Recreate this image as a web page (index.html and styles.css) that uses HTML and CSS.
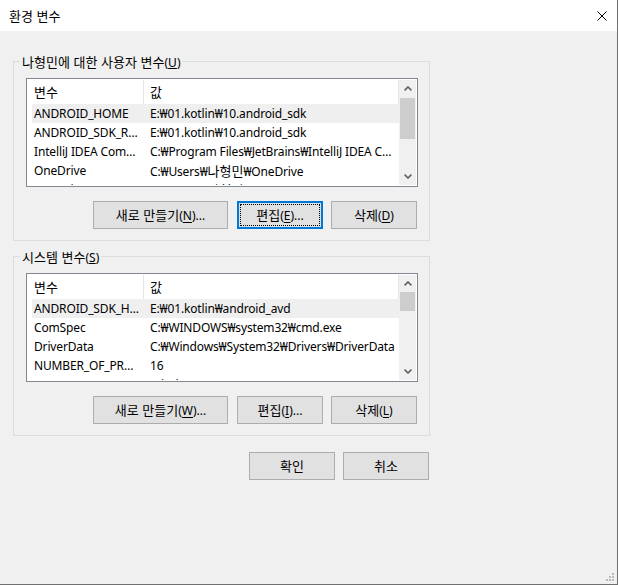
FILE: index.html
```html
<!DOCTYPE html>
<html lang="ko">
<head>
<meta charset="utf-8">
<title>환경 변수</title>
<link rel="stylesheet" href="styles.css">
</head>
<body>
<div class="window">
  <div class="titlebar">
    <span class="title ko">환경 변수</span>
    <svg class="close" width="10" height="10" viewBox="0 0 10 10"><path d="M0.5 0.5 L9.5 9.5 M9.5 0.5 L0.5 9.5" stroke="#000" stroke-width="1" fill="none"/></svg>
  </div>
  <div class="content">
    <fieldset class="group">
      <legend><span class="ko">나형민에 대한 사용자 변수</span>(<u>U</u>)</legend>
      <div class="listview">
        <div class="lv-body">
          <div class="lv-header"><div class="cell c1 ko">변수</div><div class="cell c2 ko">값</div></div>
          <div class="row hot"><div class="cell c1">ANDROID_HOME</div><div class="cell c2">E:₩01.kotlin₩10.android_sdk</div></div>
          <div class="row"><div class="cell c1">ANDROID_SDK_ROOT</div><div class="cell c2">E:₩01.kotlin₩10.android_sdk</div></div>
          <div class="row"><div class="cell c1">IntelliJ IDEA Community Edition</div><div class="cell c2">C:₩Program Files₩JetBrains₩IntelliJ IDEA Community Edition 2021.1₩bin;</div></div>
          <div class="row"><div class="cell c1">OneDrive</div><div class="cell c2">C:₩Users₩<span class="ko">나형민</span>₩OneDrive</div></div>
          <div class="row"><div class="cell c1">OneDriveConsumer</div><div class="cell c2">C:₩Users₩<span class="ko">나형민</span>₩OneDrive</div></div>
        </div>
        <div class="scrollbar">
          <div class="sb-btn"><svg width="8" height="5" viewBox="0 0 8 5"><path d="M0.6 4.4 L4 1 L7.4 4.4" stroke="#606060" stroke-width="1.6" fill="none"/></svg></div>
          <div class="sb-track"><div class="thumb thumb-user"></div></div>
          <div class="sb-btn"><svg width="8" height="5" viewBox="0 0 8 5"><path d="M0.6 0.6 L4 4 L7.4 0.6" stroke="#606060" stroke-width="1.6" fill="none"/></svg></div>
        </div>
      </div>
      <div class="buttons">
        <button class="btn wide"><span class="ko">새로 만들기</span>(<u>N</u>)...</button>
        <button class="btn focus gap9"><span class="ko">편집</span>(<u>E</u>)...</button>
        <button class="btn gap8"><span class="ko">삭제</span>(<u>D</u>)</button>
      </div>
    </fieldset>

    <fieldset class="group second">
      <legend><span class="ko">시스템 변수</span>(<u>S</u>)</legend>
      <div class="listview">
        <div class="lv-body">
          <div class="lv-header"><div class="cell c1 ko">변수</div><div class="cell c2 ko">값</div></div>
          <div class="row hot"><div class="cell c1">ANDROID_SDK_HOME</div><div class="cell c2">E:₩01.kotlin₩android_avd</div></div>
          <div class="row"><div class="cell c1">ComSpec</div><div class="cell c2">C:₩WINDOWS₩system32₩cmd.exe</div></div>
          <div class="row"><div class="cell c1">DriverData</div><div class="cell c2">C:₩Windows₩System32₩Drivers₩DriverData</div></div>
          <div class="row"><div class="cell c1">NUMBER_OF_PROCESSORS</div><div class="cell c2">16</div></div>
          <div class="row"><div class="cell c1">OS</div><div class="cell c2">Windows_NT</div></div>
        </div>
        <div class="scrollbar">
          <div class="sb-btn"><svg width="8" height="5" viewBox="0 0 8 5"><path d="M0.6 4.4 L4 1 L7.4 4.4" stroke="#606060" stroke-width="1.6" fill="none"/></svg></div>
          <div class="sb-track"><div class="thumb thumb-system"></div></div>
          <div class="sb-btn"><svg width="8" height="5" viewBox="0 0 8 5"><path d="M0.6 0.6 L4 4 L7.4 0.6" stroke="#606060" stroke-width="1.6" fill="none"/></svg></div>
        </div>
      </div>
      <div class="buttons">
        <button class="btn wide"><span class="ko">새로 만들기</span>(<u>W</u>)...</button>
        <button class="btn gap9"><span class="ko">편집</span>(<u>I</u>)...</button>
        <button class="btn gap8"><span class="ko">삭제</span>(<u>L</u>)</button>
      </div>
    </fieldset>

    <div class="dialog-buttons">
      <button class="btn"><span class="ko">확인</span></button>
      <button class="btn gap8"><span class="ko">취소</span></button>
    </div>
  </div>
  <svg class="grip" width="8" height="8" viewBox="0 0 8 8">
    <rect x="6" y="0" width="2" height="2" fill="#b9b9b9"/>
    <rect x="3" y="3" width="2" height="2" fill="#b9b9b9"/>
    <rect x="6" y="3" width="2" height="2" fill="#b9b9b9"/>
    <rect x="0" y="6" width="2" height="2" fill="#b9b9b9"/>
    <rect x="3" y="6" width="2" height="2" fill="#b9b9b9"/>
    <rect x="6" y="6" width="2" height="2" fill="#b9b9b9"/>
  </svg>
</div>
</body>
</html>
```

FILE: styles.css
```css
* {
  box-sizing: border-box;
}

html, body {
  margin: 0;
  padding: 0;
  background: #f0f0f0;
}

body {
  font-family: "Noto Sans", "Noto Sans CJK KR", sans-serif;
  font-size: 12px;
  color: #000;
}

.ko {
  font-family: "Noto Sans CJK KR", sans-serif;
  font-size: 13px;
}

.window {
  position: relative;
  width: 618px;
  height: 585px;
  background: #f0f0f0;
  border-right: 1px solid #707070;
  border-bottom: 1px solid #707070;
  overflow: hidden;
}

.titlebar {
  height: 31px;
  background: #fff;
  display: flex;
  align-items: center;
  justify-content: space-between;
  padding-left: 9px;
  padding-right: 10px;
}

.title {
  line-height: 16px;
}

.close {
  display: block;
}

.content {
  padding: 23px 0 0 13px;
}

.group {
  width: 417px;
  height: 187px;
  margin: 0;
  padding: 9px 11px 0 12px;
  border: 1px solid #dcdcdc;
  min-width: 0;
}

.group.second {
  margin-top: 8px;
}

.group legend {
  line-height: 15px;
  height: 15px;
  padding: 0 2px;
  margin-left: -6px;
}

.listview {
  width: 392px;
  height: 109px;
  border: 1px solid #828790;
  padding: 1px;
  background: #fff;
  display: flex;
}

.lv-body {
  flex: 1;
  min-width: 0;
  overflow: hidden;
}

.lv-header {
  height: 24px;
  display: flex;
  border-right: 1px solid #e5e5e5;
}

.lv-header .cell {
  line-height: 24px;
}

.lv-header .c1 {
  width: 116px;
  padding-left: 6px;
  border-right: 1px solid #e5e5e5;
}

.lv-header .c2 {
  padding-left: 6px;
}

.row {
  height: 19px;
  display: flex;
  margin-left: 4px;
}

.row.hot {
  background: #efefef;
}

.cell {
  white-space: nowrap;
  overflow: hidden;
  text-overflow: ellipsis;
  line-height: 19px;
}

.row .cell {
  letter-spacing: -0.15px;
}

.row .c1 {
  width: 112px;
  flex: none;
  padding-left: 2px;
  padding-right: 2px;
}

.c2 {
  flex: 1;
  min-width: 0;
  padding-left: 6px;
  padding-right: 2px;
}

.row .c2 .ko {
  letter-spacing: 0;
}

.scrollbar {
  width: 17px;
  flex: none;
  background: #f0f0f0;
  display: flex;
  flex-direction: column;
}

.sb-btn {
  height: 17px;
  display: flex;
  align-items: center;
  justify-content: center;
}

.sb-btn svg {
  display: block;
}

.sb-track {
  flex: 1;
  padding: 0 1px;
}

.thumb {
  background: #cdcdcd;
}

.thumb-user {
  margin-top: 1px;
  height: 41px;
}

.thumb-system {
  height: 19px;
}

.buttons {
  margin-top: 14px;
  display: flex;
  justify-content: flex-end;
  padding-right: 1px;
}

.btn {
  width: 86px;
  height: 28px;
  padding: 0;
  margin: 0;
  background: #e1e1e1;
  border: 1px solid #adadad;
  border-radius: 0;
  font: inherit;
  color: #000;
  line-height: 16px;
}

.btn.wide {
  width: 135px;
}

.btn.gap9 {
  margin-left: 9px;
}

.btn.gap8 {
  margin-left: 8px;
}

.btn.focus {
  border: 2px solid #0078d7;
  outline: 1px dotted #000;
  outline-offset: -4px;
}

.btn u {
  text-decoration-thickness: 1px;
  text-underline-offset: 2px;
}

.dialog-buttons {
  width: 417px;
  margin-top: 16px;
  display: flex;
  justify-content: flex-end;
  padding-right: 1px;
}

.grip {
  position: absolute;
  right: 3px;
  bottom: 3px;
  display: block;
}
```
